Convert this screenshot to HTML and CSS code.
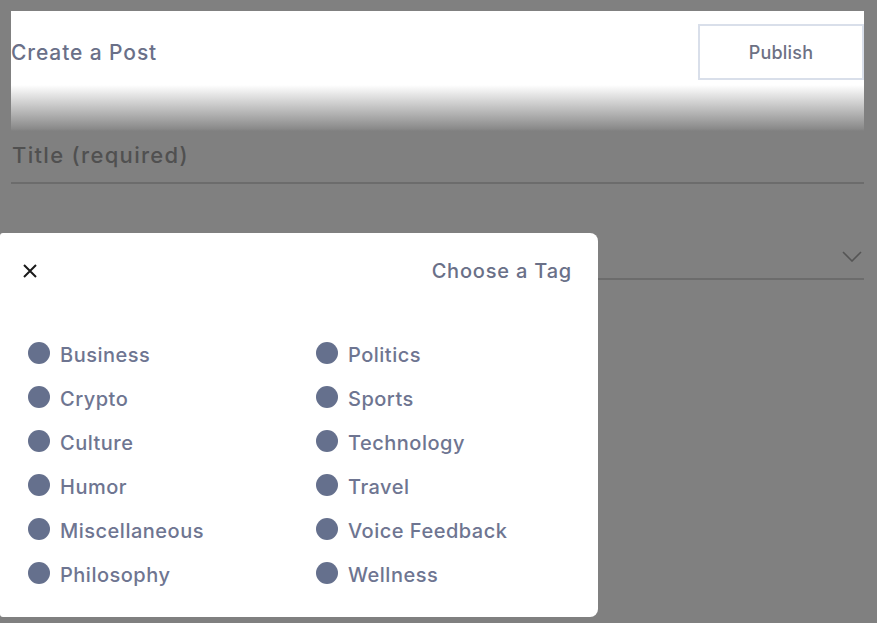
FILE: index.html
```html
<!DOCTYPE html>
<html lang="en">
<head>
    <meta charset="UTF-8">
    <meta name="viewport" content="width=device-width, initial-scale=1.0">
    <title>Create a Post</title>
    <link rel="stylesheet" href="styles.css">
</head>
<body>
    <div class="page">
        <div class="header">
            <h1>Create a Post</h1>
            <button class="publish">Publish</button>
        </div>
        <div class="fade"></div>

        <div class="field title-field">Title (required)</div>
        <div class="field select-field">
            <svg class="chevron" width="20" height="11" viewBox="0 0 20 11">
                <path d="M1 1 L10 10 L19 1" fill="none" stroke="#555" stroke-width="1.6"/>
            </svg>
        </div>
    </div>

    <div class="modal">
        <div class="modal-head">
            <svg class="close" width="16" height="16" viewBox="0 0 16 16">
                <path d="M2 2 L14 14 M14 2 L2 14" stroke="#1a1a1a" stroke-width="2"/>
            </svg>
            <span class="modal-title">Choose a Tag</span>
        </div>
        <div class="tags">
            <div class="tag"><span class="dot"></span>Business</div>
            <div class="tag"><span class="dot"></span>Politics</div>
            <div class="tag"><span class="dot"></span>Crypto</div>
            <div class="tag"><span class="dot"></span>Sports</div>
            <div class="tag"><span class="dot"></span>Culture</div>
            <div class="tag"><span class="dot"></span>Technology</div>
            <div class="tag"><span class="dot"></span>Humor</div>
            <div class="tag"><span class="dot"></span>Travel</div>
            <div class="tag"><span class="dot"></span>Miscellaneous</div>
            <div class="tag"><span class="dot"></span>Voice Feedback</div>
            <div class="tag"><span class="dot"></span>Philosophy</div>
            <div class="tag"><span class="dot"></span>Wellness</div>
        </div>
    </div>
</body>
</html>
```

FILE: styles.css
```css
body { margin: 0; background: #808080; font-family: "Inter", "Open Sans", sans-serif; }
.page { padding: 11px 13px 0 11px; height: 612px; }
.header { background: #fff; height: 74px; display: flex; justify-content: space-between; }
.header h1 { margin: 0; padding-top: 29px; font-size: 21px; line-height: 26px; font-weight: 500; letter-spacing: 0.9px; color: #6a7088; }
.publish { width: 166px; height: 56px; margin-top: 13px; background: #fff; border: 2px solid #d9dfea; font-family: inherit; font-size: 18px; font-weight: 500; letter-spacing: 0.2px; color: #6d7184; }
.fade { height: 46px; background: linear-gradient(#fff, #c8c8c8 45%, #8a8a8a 95%, #808080); }
.field { border-bottom: 2px solid #6c6c6c; }
.title-field { height: 53px; display: flex; align-items: center; padding-left: 1px; padding-bottom: 4px; box-sizing: border-box; font-size: 22px; font-weight: 500; letter-spacing: 1.3px; color: #505050; }
.select-field { height: 96px; display: flex; align-items: flex-end; justify-content: flex-end; padding-bottom: 16px; box-sizing: border-box; }
.chevron { margin-right: 2px; }
.modal { position: absolute; left: 0; top: 233px; width: 598px; height: 384px; background: #fff; border-radius: 3px 8px 8px 3px; box-sizing: border-box; padding: 0 26px 0 22px; }
.modal-head { height: 76px; display: flex; align-items: center; justify-content: space-between; }
.modal-title { font-size: 20px; font-weight: 500; letter-spacing: 0.8px; color: #6a7088; }
.tags { display: grid; grid-template-columns: 288px 1fr; padding-left: 6px; margin-top: 24px; }
.tag { display: flex; align-items: center; height: 44px; font-size: 20px; font-weight: 500; letter-spacing: 0.5px; color: #6e7591; }
.dot { width: 22px; height: 22px; border-radius: 50%; background: #65708d; margin-right: 10px; margin-top: -4px; }
```
